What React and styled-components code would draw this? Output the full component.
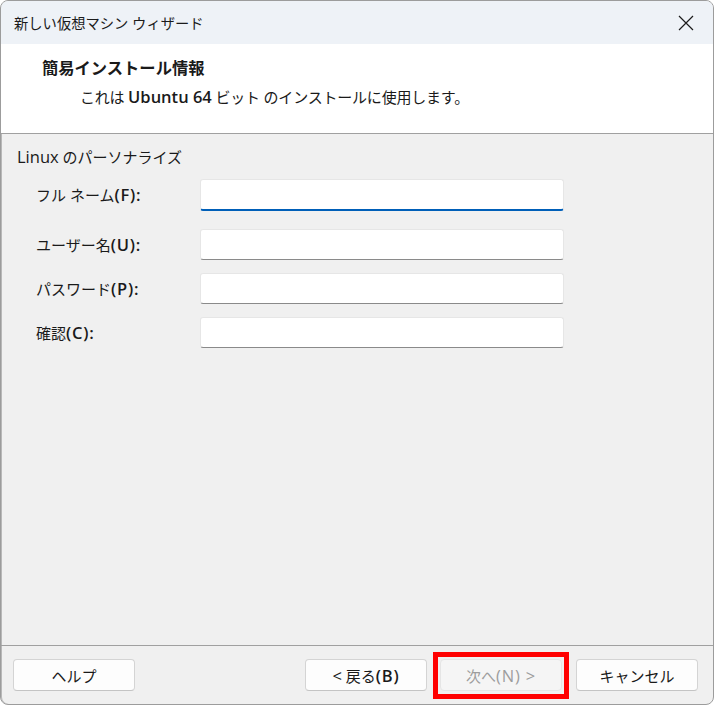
import React from 'react';
import styled, { createGlobalStyle } from 'styled-components';

const GlobalStyle = createGlobalStyle`
    html, body {
        margin:0;
        padding:0;
        background:#ffffff;
    }
    body {
        font-family:"Open Sans", "Noto Sans CJK JP", sans-serif;
        font-size:15px;
        color:#1a1a1a;
    }
`;

const Window = styled.div`
    box-sizing:border-box;
    width:714px;
    height:705px;
    border:1px solid #9c9c9c;
    border-radius:8px;
    overflow:hidden;
    display:flex;
    flex-direction:column;
    background:#f0f0f0;
    box-shadow:inset 1px 0 0 #b8b8b8;
`;

const TitleBar = styled.div`
    height:43px;
    flex:none;
    background:#eef2f7;
    display:flex;
    align-items:center;
    justify-content:space-between;
    padding:0 0 0 13px;
`;

const Title = styled.span`
    font-size:14.3px;
    color:#1b1b1b;
`;

const CloseBtn = styled.div`
    width:46px;
    height:43px;
    display:flex;
    align-items:center;
    justify-content:center;
    margin-right:4px;
`;

const Header = styled.div`
    height:90px;
    flex:none;
    background:#fff;
    border-bottom:1px solid #a0a0a0;
    box-sizing:border-box;
    padding:13px 0 0 41px;
`;

const HeaderTitle = styled.div`
    font-weight:700;
    font-size:16.3px;
    line-height:22px;
`;

const HeaderSub = styled.div`
    margin:7px 0 0 38px;
    line-height:22px;
    letter-spacing:-0.2px;
`;

// latin runs are rendered a bit larger than the japanese text around them
const Lat = styled.span`
    font-size:16.5px;
    font-weight:${p => (p.$b ? 600 : 400)};
    letter-spacing:${p => (p.$wide ? '0.8px' : '0')};
`;

const Body = styled.div`
    flex:1;
    padding:12px 0 0 16px;
`;

const SectionLabel = styled.div`
    line-height:22px;
`;

const Form = styled.div`
    margin:11px 0 0 19px;
    display:flex;
    flex-direction:column;
`;

const Row = styled.div`
    display:grid;
    grid-template-columns:164px 364px;
    align-items:center;
    margin-bottom:${p => (p.$focused ? '18px' : '13px')};
`;

const Label = styled.label`
    line-height:22px;
`;

const Field = styled.input`
    box-sizing:border-box;
    height:${p => (p.$focused ? '32px' : '31px')};
    width:364px;
    background:#fff;
    border:1px solid #e6e6e6;
    border-bottom:${p => (p.$focused ? '2px solid #005fb8' : '1px solid #8a8a8a')};
    border-radius:3px;
    outline:none;
    padding:0 8px;
    font:inherit;
`;

const Footer = styled.div`
    flex:none;
    height:59px;
    border-top:1px solid #a0a0a0;
    box-sizing:border-box;
    display:flex;
    align-items:flex-start;
    padding:13px 15px 0 12px;
`;

const Spacer = styled.div`
    flex:1;
`;

const Button = styled.button`
    box-sizing:border-box;
    width:122px;
    height:32px;
    background:${p => (p.disabled ? '#f5f5f5' : '#fdfdfd')};
    border:1px solid ${p => (p.disabled ? '#e5e5e5' : '#d4d4d4')};
    border-bottom-color:${p => (p.disabled ? '#e5e5e5' : '#c4c4c4')};
    border-radius:4px;
    font:inherit;
    font-size:15px;
    color:${p => (p.disabled ? '#9d9d9d' : '#1a1a1a')};
    padding:0;
    margin-left:${p => p.$gap || 0}px;
    position:relative;
`;

const Highlight = styled.div`
    position:relative;
    margin-left:13px;
    &::after{
        content:'';
        position:absolute;
        left:-7px;
        top:-7px;
        right:-7px;
        bottom:-8px;
        border:5px solid #ff0000;
        pointer-events:none;
    }
`;

export default function App() {
    return (
        <>
            <GlobalStyle />
            <Window>
                <TitleBar>
                    <Title>新しい仮想マシン ウィザード</Title>
                    <CloseBtn>
                        <svg width="16" height="16" viewBox="0 0 16 16">
                            <path d="M1 1 L15 15 M15 1 L1 15" stroke="#1b1b1b" strokeWidth="1.2" fill="none" />
                        </svg>
                    </CloseBtn>
                </TitleBar>
                <Header>
                    <HeaderTitle>簡易インストール情報</HeaderTitle>
                    <HeaderSub>これは <Lat $b>Ubuntu 64</Lat> ビット のインストールに使用します。</HeaderSub>
                </Header>
                <Body>
                    <SectionLabel><Lat>Linux</Lat> のパーソナライズ</SectionLabel>
                    <Form>
                        <Row $focused>
                            <Label>フル ネーム<Lat $b $wide>(F):</Lat></Label>
                            <Field $focused />
                        </Row>
                        <Row>
                            <Label>ユーザー名<Lat $b $wide>(U):</Lat></Label>
                            <Field />
                        </Row>
                        <Row>
                            <Label>パスワード<Lat $b $wide>(P):</Lat></Label>
                            <Field type="password" />
                        </Row>
                        <Row>
                            <Label>確認<Lat $b $wide>(C):</Lat></Label>
                            <Field type="password" />
                        </Row>
                    </Form>
                </Body>
                <Footer>
                    <Button>ヘルプ</Button>
                    <Spacer />
                    <Button><Lat>&lt;</Lat> 戻る<Lat $b $wide>(B)</Lat></Button>
                    <Highlight>
                        <Button disabled>次へ<Lat $wide>(N) &gt;</Lat></Button>
                    </Highlight>
                    <Button $gap={14}>キャンセル</Button>
                </Footer>
            </Window>
        </>
    );
}
